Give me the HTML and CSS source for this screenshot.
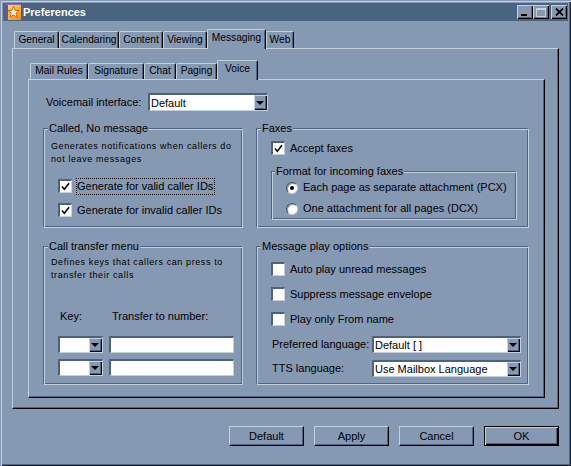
FILE: index.html
```html
<!DOCTYPE html>
<html>
<head>
<meta charset="utf-8">
<title>Preferences</title>
<link rel="stylesheet" href="styles.css">
</head>
<body>
<div class="window">
  <div class="titlebar">
    <svg class="app-icon" viewBox="0 0 16 16" width="16" height="16">
      <defs>
        <linearGradient id="ig" x1="0" y1="0" x2="1" y2="1">
          <stop offset="0" stop-color="#ffe070"/>
          <stop offset="1" stop-color="#f08a10"/>
        </linearGradient>
      </defs>
      <rect width="16" height="16" fill="url(#ig)"/>
      <rect width="3" height="16" fill="#6b4fa0"/>
      <rect width="16" height="1" fill="#8a6cc0"/>
      <path d="M8.5 2.5 L10 6.3 L14 6.5 L11 9.1 L12 13.2 L8.5 11 L5 13.2 L6 9.1 L3 6.5 L7 6.3Z" fill="#fffbe0" stroke="#e0600a" stroke-width="1"/>
    </svg>
    <span class="title">Preferences</span>
    <div class="tb-btns">
      <span class="tb-btn"><span class="glyph-min"></span></span>
      <span class="tb-btn"><span class="glyph-max"></span></span>
      <span class="tb-btn tb-close">
        <svg viewBox="0 0 9 8" width="9" height="8"><path d="M1 0.5 L8 7.5 M8 0.5 L1 7.5" stroke="#000" stroke-width="1.8"/></svg>
      </span>
    </div>
  </div>

  <div class="main">
    <div class="tabs">
      <div class="tab t-general">General</div>
      <div class="tab t-calendaring">Calendaring</div>
      <div class="tab t-content">Content</div>
      <div class="tab t-viewing">Viewing</div>
      <div class="tab active t-messaging">Messaging</div>
      <div class="tab t-web">Web</div>
    </div>
    <div class="panel">
      <div class="tabs inner-tabs">
        <div class="tab t-mailrules">Mail Rules</div>
        <div class="tab t-signature">Signature</div>
        <div class="tab t-chat">Chat</div>
        <div class="tab t-paging">Paging</div>
        <div class="tab active t-voice">Voice</div>
      </div>
      <div class="inner-panel">
        <div class="vm-row">
          <span class="vm-label">Voicemail interface:</span>
          <div class="select vm-select"><span class="select-value">Default</span><span class="select-btn"><span class="arrow"></span></span></div>
        </div>

        <div class="groups">
          <div class="group g-called">
            <span class="legend">Called, No message</span>
            <p class="desc">Generates notifications when callers do<br>not leave messages</p>
            <div class="check-list">
              <div class="check"><span class="box"><svg viewBox="0 0 11 11" width="11" height="11"><path d="M2 5.5 L4.3 8.3 L9 2.3" fill="none" stroke="#000" stroke-width="1.6"/></svg></span><span class="check-label focus">Generate for valid caller IDs</span></div>
              <div class="check"><span class="box"><svg viewBox="0 0 11 11" width="11" height="11"><path d="M2 5.5 L4.3 8.3 L9 2.3" fill="none" stroke="#000" stroke-width="1.6"/></svg></span><span class="check-label">Generate for invalid caller IDs</span></div>
            </div>
          </div>

          <div class="group g-faxes">
            <span class="legend">Faxes</span>
            <div class="check"><span class="box"><svg viewBox="0 0 11 11" width="11" height="11"><path d="M2 5.5 L4.3 8.3 L9 2.3" fill="none" stroke="#000" stroke-width="1.6"/></svg></span><span class="check-label">Accept faxes</span></div>
            <div class="group g-format">
              <span class="legend legend-inner">Format for incoming faxes</span>
              <div class="radio-row"><span class="radio on"></span><span>Each page as separate attachment (PCX)</span></div>
              <div class="radio-row"><span class="radio"></span><span>One attachment for all pages (DCX)</span></div>
            </div>
          </div>

          <div class="group g-transfer">
            <span class="legend">Call transfer menu</span>
            <p class="desc">Defines keys that callers can press to<br>transfer their calls</p>
            <div class="kt-head">
              <span class="kt-key">Key:</span>
              <span class="kt-num">Transfer to number:</span>
            </div>
            <div class="kt-row">
              <div class="select key-select"><span class="select-value"></span><span class="select-btn"><span class="arrow"></span></span></div>
              <div class="textbox"></div>
            </div>
            <div class="kt-row kt-row2">
              <div class="select key-select"><span class="select-value"></span><span class="select-btn"><span class="arrow"></span></span></div>
              <div class="textbox"></div>
            </div>
          </div>

          <div class="group g-play">
            <span class="legend">Message play options</span>
            <div class="play-list">
              <div class="check"><span class="box"></span><span class="check-label">Auto play unread messages</span></div>
              <div class="check"><span class="box"></span><span class="check-label">Suppress message envelope</span></div>
              <div class="check"><span class="box"></span><span class="check-label">Play only From name</span></div>
            </div>
            <div class="lang-row">
              <span class="lang-label">Preferred language:</span>
              <div class="select lang-select"><span class="select-value">Default [ ]</span><span class="select-btn"><span class="arrow"></span></span></div>
            </div>
            <div class="lang-row lang-row2">
              <span class="lang-label">TTS language:</span>
              <div class="select lang-select"><span class="select-value">Use Mailbox Language</span><span class="select-btn"><span class="arrow"></span></span></div>
            </div>
          </div>
        </div>
      </div>
    </div>

    <div class="buttons">
      <div class="btn">Default</div>
      <div class="btn">Apply</div>
      <div class="btn">Cancel</div>
      <div class="btn btn-default">OK</div>
    </div>
  </div>
</div>
</body>
</html>
```

FILE: styles.css
```css
* { box-sizing: border-box; }

html, body {
  margin: 0;
  padding: 0;
  background: #8699b3;
}

body {
  font-family: "Liberation Sans", Arial, sans-serif;
  font-size: 11px;
  line-height: 13px;
  color: #000;
}

.window {
  width: 571px;
  height: 466px;
  padding: 3px;
  background: #8699b3;
  box-shadow: inset 1px 1px 0 #8699b3, inset 2px 2px 0 #c5d0df,
              inset -1px -1px 0 #1c2430, inset -2px -2px 0 #52657e;
  display: flex;
  flex-direction: column;
}

/* ---------- title bar ---------- */
.titlebar {
  height: 18px;
  flex: none;
  background: #4a6480;
  display: flex;
  align-items: center;
  padding: 0 1px 0 2px;
  color: #fff;
}

.app-icon { flex: none; display: block; }

.title {
  flex: 1;
  margin-left: 2px;
  font-weight: bold;
  font-size: 11px;
}

.tb-btns { display: flex; }

.tb-btn {
  width: 16px;
  height: 14px;
  background: #8699b3;
  box-shadow: inset 1px 1px 0 #c5d0df, inset -1px -1px 0 #000, inset -2px -2px 0 #52657e;
  position: relative;
  display: flex;
  align-items: center;
  justify-content: center;
}

.tb-close { margin-left: 2px; }

.glyph-min {
  position: absolute;
  left: 4px;
  top: 9px;
  width: 6px;
  height: 2px;
  background: #000;
}

.glyph-max {
  width: 10px;
  height: 9px;
  border: 1px solid #c5d0df;
  border-top-width: 2px;
  box-shadow: 1px 1px 0 #6d8098;
}

/* ---------- tabs ---------- */
.main {
  flex: 1;
  padding: 8px 9px 0 9px;
}

.tabs {
  display: flex;
  align-items: flex-end;
  height: 20px;
  margin-bottom: -1px;
  padding-left: 2px;
  position: relative;
  z-index: 1;
  font-size: 10.2px;
}

.tab {
  height: 17px;
  margin-bottom: 1px;
  border-top: 1px solid #c5d0df;
  border-left: 1px solid #c5d0df;
  border-right: 1px solid #000;
  border-radius: 2px 2px 0 0;
  box-shadow: inset -1px 0 0 #52657e;
  padding-top: 1px;
  text-align: center;
  white-space: nowrap;
}

.tab.active {
  height: 20px;
  margin-bottom: 0;
  background: #8699b3;
  padding-top: 1px;
}

.t-general { width: 45px; }
.t-calendaring { width: 60px; }
.t-content { width: 44px; }
.t-viewing { width: 44px; }
.t-messaging { width: 59px; }
.t-web { width: 28px; }

.inner-tabs .tab { height: 16px; padding-top: 0; }
.inner-tabs .tab.active { height: 20px; padding-top: 1px; }

.t-mailrules { width: 58px; }
.t-signature { width: 56px; }
.t-chat { width: 32px; }
.t-paging { width: 41px; }
.t-voice { width: 41px; }

/* ---------- panels ---------- */
.panel {
  height: 361px;
  border-top: 1px solid #c5d0df;
  border-left: 1px solid #c5d0df;
  border-right: 1px solid #000;
  border-bottom: 1px solid #000;
  box-shadow: inset -1px -1px 0 #52657e;
  padding: 11px 13px 10px 15px;
}

.inner-panel {
  height: 319px;
  border-top: 1px solid #c5d0df;
  border-left: 1px solid #c5d0df;
  border-right: 1px solid #000;
  border-bottom: 1px solid #000;
  box-shadow: inset -1px -1px 0 #52657e;
  padding: 13px 15px 12px 14px;
}

.vm-row {
  display: flex;
  align-items: center;
  height: 18px;
  padding-left: 3px;
}

.vm-label { width: 102px; }

/* ---------- selects / inputs ---------- */
.select {
  display: flex;
  background: #fff;
  border-top: 2px solid #4f627a;
  border-left: 2px solid #4f627a;
  border-bottom: 1px solid #c5d0df;
  border-right: 1px solid #c5d0df;
}

.select-value {
  flex: 1;
  padding-left: 1px;
  white-space: nowrap;
  overflow: hidden;
}

.select-btn {
  width: 13px;
  flex: none;
  background: #8699b3;
  box-shadow: inset 1px 1px 0 #c5d0df, inset -1px -1px 0 #000, inset -2px -2px 0 #52657e;
  display: flex;
  align-items: center;
  justify-content: center;
}

.arrow {
  width: 0;
  height: 0;
  border-left: 4px solid transparent;
  border-right: 4px solid transparent;
  border-top: 4px solid #000;
  margin-left: -1px;
}

.vm-select { width: 120px; height: 18px; line-height: 14px; }
.vm-select .select-value { padding-top: 1px; }

.textbox {
  width: 125px;
  height: 17px;
  background: #fff;
  border-top: 2px solid #4f627a;
  border-left: 2px solid #4f627a;
  border-bottom: 1px solid #c5d0df;
  border-right: 1px solid #c5d0df;
}

/* ---------- groups ---------- */
.groups {
  margin-top: 17px;
  display: grid;
  grid-template-columns: 200px 273px;
  grid-template-rows: 100px 139px;
  column-gap: 13px;
  row-gap: 18px;
}

.group {
  position: relative;
  border-top: 1px solid #52657e;
  border-left: 1px solid #52657e;
  border-bottom: 1px solid #c5d0df;
  border-right: 1px solid #c5d0df;
  box-shadow: inset 1px 1px 0 #c5d0df, inset -1px -1px 0 #52657e;
}

.legend {
  position: absolute;
  top: -7px;
  left: 4px;
  padding: 0 1px;
  background: #8699b3;
  white-space: nowrap;
}

.legend-inner { left: 3px; }

.desc {
  margin: 0;
  font-size: 9px;
  letter-spacing: 0.6px;
  line-height: 13px;
  white-space: nowrap;
}

.g-called { padding: 11px 6px 0 7px; }
.g-transfer { padding: 9px 6px 0 7px; }

.check-list {
  margin: 11px 0 0 7px;
  display: flex;
  flex-direction: column;
  gap: 6px;
}

.check {
  display: flex;
  align-items: center;
  height: 18px;
  gap: 4px;
}

.box {
  width: 14px;
  height: 14px;
  flex: none;
  background: #fff;
  border-top: 2px solid #4f627a;
  border-left: 2px solid #4f627a;
  border-bottom: 1px solid #c5d0df;
  border-right: 1px solid #c5d0df;
  display: flex;
}

.box svg { display: block; }

.check-label {
  border: 1px solid transparent;
  padding: 1px 1px 1px 0;
  white-space: nowrap;
}

.check-label.focus { border: 1px dotted #000; }

.g-faxes { padding: 10px 11px 0 14px; }

.g-format {
  margin-top: 14px;
  width: 246px;
  height: 49px;
  padding-top: 6px;
}

.radio-row {
  display: flex;
  align-items: center;
  height: 19px;
  margin-bottom: 2px;
  padding-left: 14px;
  gap: 5px;
  white-space: nowrap;
}

.radio {
  width: 12px;
  height: 12px;
  flex: none;
  border-radius: 50%;
  background: #fff;
  border: 1px solid;
  border-color: #3e4f66 #c5d0df #c5d0df #3e4f66;
  box-shadow: inset 1px 1px 0 #8699b3;
  display: flex;
  align-items: center;
  justify-content: center;
}

.radio.on::after {
  content: "";
  width: 4px;
  height: 4px;
  border-radius: 50%;
  background: #000;
}

.kt-head {
  display: flex;
  margin: 28px 0 0 7px;
}

.kt-key { width: 51px; padding-left: 2px; }
.kt-num { padding-left: 3px; }

.kt-row {
  display: flex;
  gap: 6px;
  margin: 13px 0 0 7px;
}

.kt-row2 { margin-top: 6px; }

.key-select { width: 45px; height: 17px; }

.g-play { padding: 13px 6px 0 14px; }

.play-list {
  display: flex;
  flex-direction: column;
  gap: 7px;
}

.lang-row {
  display: flex;
  align-items: center;
  margin: 8px 0 0 1px;
}

.lang-row2 { margin-top: 7px; }

.lang-label { width: 100px; white-space: nowrap; }

.lang-select { width: 149px; height: 17px; line-height: 14px; }

/* ---------- buttons ---------- */
.buttons {
  display: flex;
  justify-content: flex-end;
  gap: 10px;
  margin-top: 17px;
}

.btn {
  width: 75px;
  height: 20px;
  line-height: 18px;
  text-align: center;
  border-top: 1px solid #c5d0df;
  border-left: 1px solid #c5d0df;
  border-right: 1px solid #000;
  border-bottom: 1px solid #000;
  box-shadow: inset -1px -1px 0 #52657e;
}

.btn-default {
  border: 1px solid #000;
  line-height: 18px;
  box-shadow: inset 1px 1px 0 #c5d0df, inset -1px -1px 0 #000, inset -2px -2px 0 #52657e;
}
```
